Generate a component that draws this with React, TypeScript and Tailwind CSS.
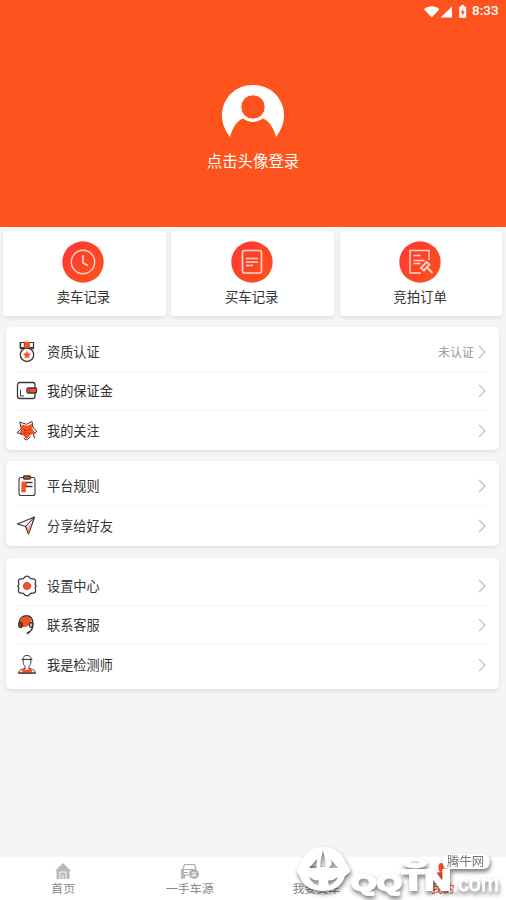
import type { ReactNode } from 'react';

const DARK = '#3d3836';
const RED = '#fb4f20';

function StatusBar() {
  return (
    <div className="flex h-[21px] items-center justify-end pr-[7px] text-white">
      <svg width="44" height="16" viewBox="0 0 44 16" fill="currentColor">
        <path d="M0 6.2C4.4 2.4 11 2.4 15.4 6.2L7.7 14.6Z" />
        <path d="M28 3.4V14.6H16.5Z" />
        <path d="M35.2 3.500h2V2h3v1.500h2v11.300h-7z" />
        <path d="M39.4 5.4l-2.8 4.4h1.8l-.4 3.4 2.9-4.6h-1.8z" fill={RED} />
      </svg>
      <span className="ml-[4px] w-[27px] whitespace-nowrap font-[Roboto,sans-serif] text-[13.5px] font-medium leading-none">8:33</span>
    </div>
  );
}

function Avatar() {
  return (
    <svg width="64" height="54" viewBox="0 0 64 54">
      <path
        d="M9 53C4 46 1 40 1 31.5C1 14 14.500 1 32 1s31 13 31 30.500C63 40 60 46 55 53C53 45 49 37.500 42 34.500C36 39 28 39 22 34.500C15 37.500 11 45 9 53Z"
        fill="white"
      />
      <circle cx="32" cy="23" r="12.200" fill="#ff531e" stroke="white" strokeWidth="1" />
    </svg>
  );
}

function Disc({ id, children }: { id: string; children: ReactNode }) {
  return (
    <svg width="42" height="42" viewBox="0 0 42 42" fill="none" stroke="#ffd5c5" strokeWidth="1.5">
      <defs>
        <linearGradient id={id} x1="0" y1="0" x2="1" y2="1">
          <stop offset="0" stopColor="#ff3535" />
          <stop offset="1" stopColor="#fd541a" />
        </linearGradient>
      </defs>
      <circle cx="21" cy="21" r="20.700" fill={`url(#${id})`} stroke="none" />
      {children}
    </svg>
  );
}

const records = [
  {
    label: '卖车记录',
    icon: (
      <Disc id="disc-sell">
        <circle cx="21" cy="21" r="11.700" />
        <path d="M21 14v8l5 2.500" strokeWidth="1.800" />
      </Disc>
    ),
  },
  {
    label: '买车记录',
    icon: (
      <Disc id="disc-buy">
        <rect x="11.500" y="9.500" width="19" height="22.500" rx="2" strokeWidth="1.700" />
        <path d="M15 17.500h12M15 21h12M15 24.500h7" />
      </Disc>
    ),
  },
  {
    label: '竞拍订单',
    icon: (
      <Disc id="disc-auction">
        <path d="M30 19V9.500H11V32h11" />
        <path d="M14.500 14.500h7M14.500 19.500h11M14.500 22.500h7" />
        <path d="M22 27l5.500-6 3 2.500-5.500 6zM28 26.500l5.500 5.500" strokeWidth="1.900" />
        <path d="M21.500 26.500l4 3.500M27 20.500l4 3.500" />
      </Disc>
    ),
  },
];

function RowIcon({ children }: { children: ReactNode }) {
  return (
    <svg width="22" height="22" viewBox="0 0 22 22" fill="none" stroke={DARK} strokeWidth="1.300" strokeLinejoin="round" strokeLinecap="round">
      {children}
    </svg>
  );
}

const MedalIcon = (
  <RowIcon>
    <path d="M4.500 1.500v6M17.500 1.500v6M4.500 7.500h13" />
    <path d="M4.500 1.500h4v5h-4zM13.500 1.500h4v5h-4z" strokeWidth="1" />
    <path d="M8.500 1h5v5.500h-5z" fill={RED} stroke={RED} strokeWidth=".5" />
    <circle cx="11" cy="13.800" r="6.700" fill="white" />
    <path d="M11 10.200l1.100 2.400 2.600.300-1.900 1.800.5 2.600-2.300-1.300-2.300 1.300.5-2.600-1.900-1.800 2.600-.300z" fill={RED} stroke={RED} strokeWidth=".4" />
  </RowIcon>
);

const WalletIcon = (
  <RowIcon>
    <rect x="1.500" y="2.500" width="17.500" height="16" rx="2.200" />
    <path d="M4.500 10v6h3" strokeWidth="1" />
    <rect x="11" y="8" width="9.500" height="5" rx="1.200" fill={RED} />
    <path d="M13.500 10.500h.1" />
  </RowIcon>
);

const StarIcon = (
  <RowIcon>
    <path d="M6 5.500L11 6.500l5-2-.3 4.500 2.800 4-4.500 1.200-3.500 3.800-3-3.500L4 13.500l2-4z" fill={RED} stroke={RED} />
    <path d="M3.500 2l7 2.300L16 1.500l1.200 6.300L20.800 11l-3.200 3.500.8 3.500M4 3l1.300 6L1 12.500l5 2M8 18.500l2.700 1.500 3.500-3" strokeWidth="1" />
    <path d="M8.500 10l1.300.7M13.500 9.500l-1 1M8.500 13.500l1.300-.7M12.500 13l1.300.5" strokeWidth=".9" />
  </RowIcon>
);

const RulesIcon = (
  <RowIcon>
    <path d="M5 2.500h12q2 0 2 2v14q0 2-2 2H5q-2 0-2-2v-14q0-2 2-2z" strokeWidth="1.100" />
    <rect x="7.500" y="1" width="7" height="3" rx="1" fill={RED} />
    <path d="M6 7h4.500v4.500H9.500V17H6z" fill={RED} stroke={RED} strokeWidth=".6" />
    <path d="M10.500 7.500H16M10 11.500h6" strokeWidth="1.300" />
  </RowIcon>
);

const ShareIcon = (
  <RowIcon>
    <path d="M1.500 9L18.500 2l-6 17-2.800-7.500z" strokeWidth="1.300" />
    <path d="M18 2.500L9.700 11.500" strokeWidth="1.100" />
    <path d="M16 7.500l-3.500 10.500-1.500-5z" fill="#f5a48c" stroke="none" />
    <path d="M12.500 18l1.300-3.500" stroke={RED} />
  </RowIcon>
);

const SettingsIcon = (
  <RowIcon>
    <path d="M11 1.200c1.600 0 2.200.6 2.900 1.700.8 1.100 1.700 1.100 3.200.9 1.900 0 2.900 1.600 2.400 3.300-.5 1.300-.7 1.800 0 3 .8.600.8 1.200 0 1.800-.7 1.200-.5 1.700 0 3 .5 1.700-.5 3.300-2.400 3.300-1.500-.2-2.400-.2-3.200.9-.7 1.100-1.300 1.700-2.900 1.700s-2.200-.6-2.900-1.700c-.8-1.100-1.700-1.100-3.200-.9-1.900 0-2.900-1.600-2.400-3.300.5-1.300.7-1.800 0-3-.8-.6-.8-1.200 0-1.800.7-1.200.5-1.700 0-3C2 5.400 3 3.800 4.900 3.800c1.500.2 2.400.2 3.200-.9.7-1.100 1.300-1.700 2.900-1.700z" />
    <circle cx="11" cy="11" r="3.600" fill={RED} stroke="#a84329" strokeWidth=".8" />
  </RowIcon>
);

const ServiceIcon = (
  <RowIcon>
    <path d="M4 11C3.500 5 6.500 2.500 10.500 2.500S16 6 14.500 9.500C13.500 12 9 14 5.500 12.500z" fill={RED} stroke="none" />
    <path d="M3 9.500C3.300 4.500 6.500 1.800 10.500 1.800s6.200 2.900 6.400 7.700" strokeWidth="1.400" />
    <ellipse cx="4.500" cy="11" rx="1.800" ry="2.500" fill="#a63b20" />
    <ellipse cx="15" cy="11" rx="1.400" ry="2.500" fill="white" />
    <path d="M17 9.500c.3 5-1.300 7-3.800 8.500" />
    <path d="M11.500 19.200l1.700-1.200" strokeWidth="2" />
  </RowIcon>
);

const InspectorIcon = (
  <RowIcon>
    <path d="M6.800 5C7 2.500 8.500 1.500 11 1.500S15 2.500 15.200 5zM6 5.500h10" strokeWidth="1" />
    <path d="M7.200 6v2.200c0 2 .6 3 1.800 4v2.300M14.800 6v2.200c0 2-.6 3-1.800 4v2.300" strokeWidth="1" />
    <path d="M8.500 14.500L5.500 15.500c-2.200.7-2.500 1.500-2.700 3.500h16.400c-.2-2-.5-2.800-2.700-3.500l-3-1" strokeWidth="1" />
    <path d="M6.500 15.500h2l2.500.8 2.500-.8h2v3h-9z" fill={RED} stroke={RED} strokeWidth=".8" />
    <path d="M2.800 19.200h16.400" />
  </RowIcon>
);

function Row({ icon, label, note }: { icon: ReactNode; label: string; note?: string }) {
  return (
    <div className="flex h-[39.4px] items-center border-b border-[#f5f5f5] last:border-b-0">
      {icon}
      <span className="ml-[9px] text-[13.2px] text-[#333]">{label}</span>
      {note && <span className="ml-auto mr-1 text-[12px] text-[#999]">{note}</span>}
      <svg className={note ? 'mr-[2px]' : 'ml-auto mr-[2px]'} width="8" height="14" viewBox="0 0 8 14" fill="none" stroke="#bdbdbd" strokeWidth="1.100">
        <path d="M1 1l6 6-6 6" />
      </svg>
    </div>
  );
}

function Group({ className, children }: { className: string; children: ReactNode }) {
  return <section className={`ml-1.5 mr-[7px] rounded-[5px] bg-white pl-2.5 pr-[11px] shadow-[0_2px_4px_rgba(0,0,0,0.09)] ${className}`}>{children}</section>;
}

const tabs = [
  {
    label: '首页',
    icon: (
      <svg width="16" height="17" viewBox="0 0 16 17" fill="#b9b9b9">
        <path d="M8 0l8 8h-1.500v8h-13V8H0z" />
        <path d="M5 16V9h6v7M8 12v4" fill="none" stroke="white" strokeWidth=".9" />
      </svg>
    ),
  },
  {
    label: '一手车源',
    icon: (
      <svg width="20" height="17" viewBox="0 0 20 17" fill="none" stroke="#aaa" strokeWidth="1.200">
        <path d="M3 6l1.500-4.500h10L16 6M1 6.500h15M1.500 6v9h3v-3H9M4 9.500h4" />
        <path d="M1 6.500h3V15H1z" fill="#b9b9b9" stroke="none" />
        <circle cx="14" cy="11" r="5" fill="#b3b3b3" stroke="none" />
        <path d="M11.500 9l2.500 1.500L16.500 9M11.500 12.500h5M14 10.500V14" stroke="white" strokeWidth=".9" />
      </svg>
    ),
  },
  {
    label: '我要卖车',
    icon: (
      <svg width="20" height="17" viewBox="0 0 20 17" fill="#b9b9b9">
        <path d="M4 3h12l2 5v7h-3v-3H5v3H2V8z" />
      </svg>
    ),
  },
  {
    label: '我的',
    active: true,
    icon: (
      <svg width="16" height="17" viewBox="0 0 16 17" fill="#f84b1f">
        <ellipse cx="6" cy="4.500" rx="2.600" ry="4.500" />
        <path d="M1 16v-4c0-2 2-3 4-3h5c3 0 5 1 5 3v4z" />
      </svg>
    ),
  },
];

function Watermark() {
  return (
    <svg
      className="pointer-events-none absolute bottom-0 right-0 drop-shadow-[1px_3px_2px_rgba(0,0,0,0.5)]"
      width="216"
      height="60"
      viewBox="290 840 216 60"
      fill="white"
    >
      <path
        fillRule="evenodd"
        d="M323 847c11 0 20 6 23 16l4 6v3l-5 4c-3 10-11 15-22 15s-20-5-23-14l-3-5v-4l4-5c3-10 11-16 22-16z
          M323 850l-2.500 12v5h5v-5z
          M317 859l-8 9h7.500v-3z
          M331 860l1 4-3 4h9z
          M309 877q5 4 10 3.500l-1 5q-6-2-9-8.500z
          M338 877q-5 4-10 3.500l1 5q6-2 9-8.500z"
      />
      <text x="351" y="889.500" textLength="51" lengthAdjust="spacingAndGlyphs" stroke="white" strokeWidth="2" className="font-['Liberation_Sans',sans-serif] text-[22px] font-bold">
        QQ
      </text>
      <text x="402" y="890" textLength="49" lengthAdjust="spacingAndGlyphs" stroke="white" strokeWidth="2.200" className="font-['Liberation_Sans',sans-serif] text-[29px] font-bold">
        TN
      </text>
      <text x="452" y="891" textLength="47" lengthAdjust="spacingAndGlyphs" stroke="white" strokeWidth=".9" className="font-['Liberation_Sans',sans-serif] text-[22px]">
        .com
      </text>
      <ellipse cx="415" cy="863.500" rx="12" ry="5" />
      <ellipse cx="415" cy="862" rx="4.500" ry="1.500" fill="#ddd" />
      <rect x="443" y="854" width="46.500" height="15" rx="6" />
      <text x="447" y="866" fill="#777" className="font-['Noto_Sans_CJK_SC',sans-serif] text-[12.400px]">
        腾牛网
      </text>
    </svg>
  );
}

export default function App() {
  return (
    <div className="relative flex h-[900px] w-[506px] flex-col overflow-hidden bg-[#f5f5f5] font-['Noto_Sans_CJK_SC',sans-serif]">
      <header className="h-[227px] shrink-0 bg-[#ff531e]">
        <StatusBar />
        <div className="flex flex-col items-center pt-[63px]">
          <Avatar />
          <p className="mt-[10px] text-[15.4px] leading-6 text-white">点击头像登录</p>
        </div>
      </header>

      <div className="mt-1 flex gap-[5.500px] pl-[3px] pr-[3.500px]">
        {records.map((r) => (
          <div key={r.label} className="flex h-[85px] flex-1 flex-col items-center rounded-[4px] bg-white pr-[2px] pt-[10px] shadow-[0_2px_4px_rgba(0,0,0,0.09)]">
            {r.icon}
            <span className="mt-[3px] text-[13.4px] leading-5 text-[#333]">{r.label}</span>
          </div>
        ))}
      </div>

      <Group className="mt-[11px] h-[123px] pt-[5.500px]">
        <Row icon={MedalIcon} label="资质认证" note="未认证" />
        <Row icon={WalletIcon} label="我的保证金" />
        <Row icon={StarIcon} label="我的关注" />
      </Group>
      <Group className="mt-[11px] h-[85px] pt-[6px]">
        <Row icon={RulesIcon} label="平台规则" />
        <Row icon={ShareIcon} label="分享给好友" />
      </Group>
      <Group className="mt-[12px] h-[131px] pt-[8.500px]">
        <Row icon={SettingsIcon} label="设置中心" />
        <Row icon={ServiceIcon} label="联系客服" />
        <Row icon={InspectorIcon} label="我是检测师" />
      </Group>

      <nav className="mt-auto flex h-[43px] shrink-0 bg-white">
        {tabs.map((t) => (
          <div key={t.label} className="flex flex-1 flex-col items-center pt-[6px]">
            {t.icon}
            <span className={`text-[11.900px] leading-4 ${t.active ? 'text-[#f84b1f]' : 'text-[#888]'}`}>{t.label}</span>
          </div>
        ))}
      </nav>

      <Watermark />
    </div>
  );
}
